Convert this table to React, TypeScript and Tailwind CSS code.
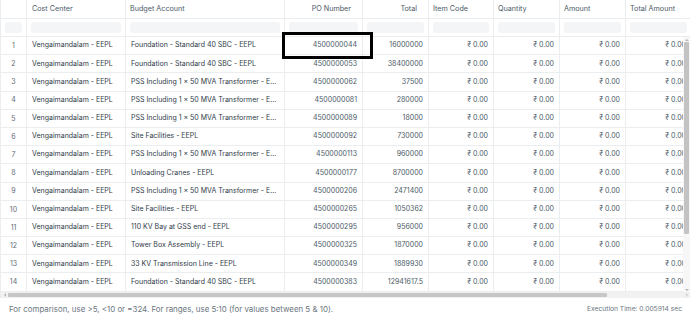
import React from "react";

const budget = {
  fnd: "Foundation - Standard 40 SBC - EEPL",
  pss: "PSS Including 1 × 50 MVA Transformer - E...",
  site: "Site Facilities - EEPL",
};

const rows = [
  { account: budget.fnd, po: "4500000044", total: "16000000" },
  { account: budget.fnd, po: "4500000053", total: "38400000" },
  { account: budget.pss, po: "4500000062", total: "37500" },
  { account: budget.pss, po: "4500000081", total: "280000" },
  { account: budget.pss, po: "4500000089", total: "18000" },
  { account: budget.site, po: "4500000092", total: "730000" },
  { account: budget.pss, po: "4500000113", total: "960000" },
  { account: "Unloading Cranes - EEPL", po: "4500000177", total: "8700000" },
  { account: budget.pss, po: "4500000206", total: "2471400" },
  { account: budget.site, po: "4500000265", total: "1050362" },
  { account: "110 KV Bay at GSS end - EEPL", po: "4500000295", total: "956000" },
  { account: "Tower Box Assembly - EEPL", po: "4500000325", total: "1870000" },
  { account: "33 KV Transmission Line - EEPL", po: "4500000349", total: "1889930" },
  { account: budget.fnd, po: "4500000383", total: "12941617.5" },
];

const cols = "grid grid-cols-[26px_99px_159px_78px_66px_65px_66px_66px_66px]";
const cell = "border-r border-[#ebeef0] flex items-center px-[5px] overflow-hidden whitespace-nowrap";

const headers: { label: string; right?: boolean }[] = [
  { label: "" },
  { label: "Cost Center" },
  { label: "Budget Account" },
  { label: "PO Number", right: true },
  { label: "Total", right: true },
  { label: "Item Code" },
  { label: "Quantity" },
  { label: "Amount" },
  { label: "Total Amount" },
];

function Money() {
  return <div className={`${cell} justify-end text-[#4c5a67]`}>₹ 0.00</div>;
}

export default function App() {
  return (
    <div className="w-[690px] h-[319px] flex flex-col bg-white overflow-hidden font-[family-name:Inter,sans-serif] text-[7px] text-[#2f3b48]">
      <div className="relative h-[298px] overflow-hidden border-l border-[#ebeef0]">
        <div className="w-[691px]">
          {/* header */}
          <div className={`${cols} h-[19px] border-b border-[#ebeef0]`}>
            {headers.map((h, i) => (
              <div
                key={i}
                className={`${cell} ${h.right ? "justify-end pr-[11px]" : "pl-[4px]"} ${i === 1 ? "pl-[5px]" : ""} text-[#4c5a67] text-[7.2px]`}
              >
                {h.label}
              </div>
            ))}
          </div>
          {/* filters */}
          <div className={`${cols} h-[18px] border-b border-[#ebeef0]`}>
            {headers.map((_, i) => (
              <div key={i} className="border-r border-[#ebeef0] flex items-center px-[4px]">
                <div className="h-[11px] w-full rounded-[3px] bg-[#f4f5f6]" />
              </div>
            ))}
          </div>
          {/* body */}
          {rows.map((r, i) => (
            <div key={i} className={`${cols} h-[18.2px] border-b border-[#ebeef0]`}>
              <div className={`${cell} justify-center text-[#5f6b76] pt-[1px]`}>{i + 1}</div>
              <div className={cell}>Vengaimandalam - EEPL</div>
              <div className={cell}>
                <span className="truncate">{r.account}</span>
              </div>
              <div className={`${cell} justify-end text-[#4c5a67]`}>{r.po}</div>
              <div className={`${cell} justify-end text-[#4c5a67]`}>{r.total}</div>
              <Money />
              <Money />
              <Money />
              <Money />
            </div>
          ))}
          <div className={`${cols} h-[10px]`}>
            {headers.map((_, i) => (
              <div key={i} className="border-r border-[#ebeef0]" />
            ))}
          </div>
        </div>

        {/* selected cell outline */}
        <div className="absolute left-[281px] top-[32px] w-[91px] h-[27px] border-[3px] border-black" />

        {/* vertical scrollbar */}
        <div className="absolute right-0 top-[37px] bottom-[6px] w-[7px] bg-[#f7f7f7] flex flex-col items-center">
          <div className="h-[5px] flex items-center">
            <div className="w-0 h-0 border-l-[2px] border-r-[2px] border-b-[2px] border-l-transparent border-r-transparent border-b-[#b5b5b5]" />
          </div>
          <div className="w-[5px] h-[192px] bg-[#c3c3c3] rounded-[1px]" />
          <div className="flex-1" />
          <div className="h-[5px] flex items-center">
            <div className="w-0 h-0 border-l-[2px] border-r-[2px] border-t-[2px] border-l-transparent border-r-transparent border-t-[#b5b5b5]" />
          </div>
        </div>

        {/* horizontal scrollbar */}
        <div className="absolute left-0 right-0 bottom-0 h-[6px] bg-[#f1f1f1] flex items-center">
          <div className="w-[7px] flex justify-center">
            <div className="w-0 h-0 border-t-[2px] border-b-[2px] border-r-[2px] border-t-transparent border-b-transparent border-r-[#b5b5b5]" />
          </div>
          <div className="w-[599px] h-[4px] bg-[#c6c6c6] rounded-[1px]" />
          <div className="flex-1" />
          <div className="w-[7px] flex justify-center">
            <div className="w-0 h-0 border-t-[2px] border-b-[2px] border-l-[2px] border-t-transparent border-b-transparent border-l-[#cfcfcf]" />
          </div>
        </div>
      </div>

      <div className="flex-1 flex items-center justify-between pl-[9px] pr-[8px] pt-[2px] text-[#6b7680]">
        <span className="text-[7.9px]">For comparison, use &gt;5, &lt;10 or =324. For ranges, use 5:10 (for values between 5 &amp; 10).</span>
        <span className="text-[6.7px]">Execution Time: 0.005914 sec</span>
      </div>
    </div>
  );
}
